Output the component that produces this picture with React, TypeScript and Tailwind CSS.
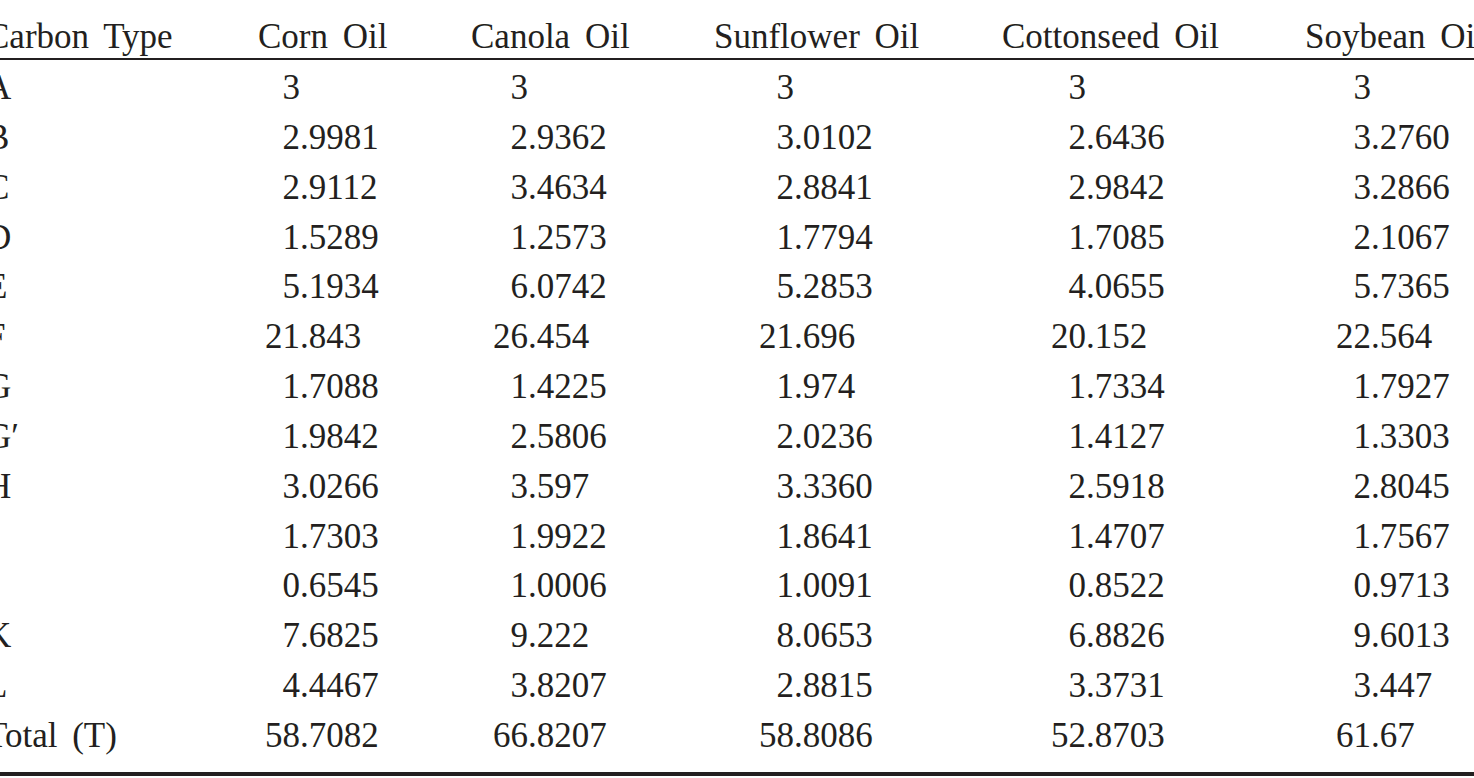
import React from "react";

const headers = ["Corn Oil", "Canola Oil", "Sunflower Oil", "Cottonseed Oil", "Soybean Oil"];

// integer-part box per column, so values line up on the decimal point
const intWidths = ["w-[42px]", "w-[57px]", "w-[80px]", "w-[84px]", "w-[66px]"];

const rows: [string, string[]][] = [
  ["A", ["3", "3", "3", "3", "3"]],
  ["B", ["2.9981", "2.9362", "3.0102", "2.6436", "3.2760"]],
  ["C", ["2.9112", "3.4634", "2.8841", "2.9842", "3.2866"]],
  ["D", ["1.5289", "1.2573", "1.7794", "1.7085", "2.1067"]],
  ["E", ["5.1934", "6.0742", "5.2853", "4.0655", "5.7365"]],
  ["F", ["21.843", "26.454", "21.696", "20.152", "22.564"]],
  ["G", ["1.7088", "1.4225", "1.974", "1.7334", "1.7927"]],
  ["G\u2032", ["1.9842", "2.5806", "2.0236", "1.4127", "1.3303"]],
  ["H", ["3.0266", "3.597", "3.3360", "2.5918", "2.8045"]],
  ["I", ["1.7303", "1.9922", "1.8641", "1.4707", "1.7567"]],
  ["J", ["0.6545", "1.0006", "1.0091", "0.8522", "0.9713"]],
  ["K", ["7.6825", "9.222", "8.0653", "6.8826", "9.6013"]],
  ["L", ["4.4467", "3.8207", "2.8815", "3.3731", "3.447"]],
  ["Total (T)", ["58.7082", "66.8207", "58.8086", "52.8703", "61.67"]],
];

const grid = "grid grid-cols-[272px_213px_243px_288px_303px_281px]";

function Num({ value, col }: { value: string; col: number }) {
  const dot = value.indexOf(".");
  const whole = dot === -1 ? value : value.slice(0, dot);
  const frac = dot === -1 ? "" : value.slice(dot);
  return (
    <div className="flex">
      <span className={`${intWidths[col]} text-right`}>{whole}</span>
      <span>{frac}</span>
    </div>
  );
}

export default function App() {
  return (
    <div className="w-[1474px] h-[778px] overflow-hidden bg-white text-[#231f20] font-['Liberation_Serif',serif] text-[35px] [word-spacing:6px]">
      <div className="ml-[-14px] w-[1600px]">
        <div className={`${grid} pt-[19px] pb-[4px] leading-[35px] border-b-2 border-[#231f20] whitespace-nowrap`}>
          <div>Carbon Type</div>
          {headers.map((h) => (
            <div key={h}>{h}</div>
          ))}
        </div>
        <div className="pt-[3px] pb-[11px] border-b-4 border-[#231f20]">
          {rows.map(([label, values]) => (
            <div key={label} className={`${grid} h-[49.85px] leading-[49.85px] whitespace-nowrap`}>
              <div>{label}</div>
              {values.map((v, i) => (
                <Num key={i} value={v} col={i} />
              ))}
            </div>
          ))}
        </div>
      </div>
    </div>
  );
}
